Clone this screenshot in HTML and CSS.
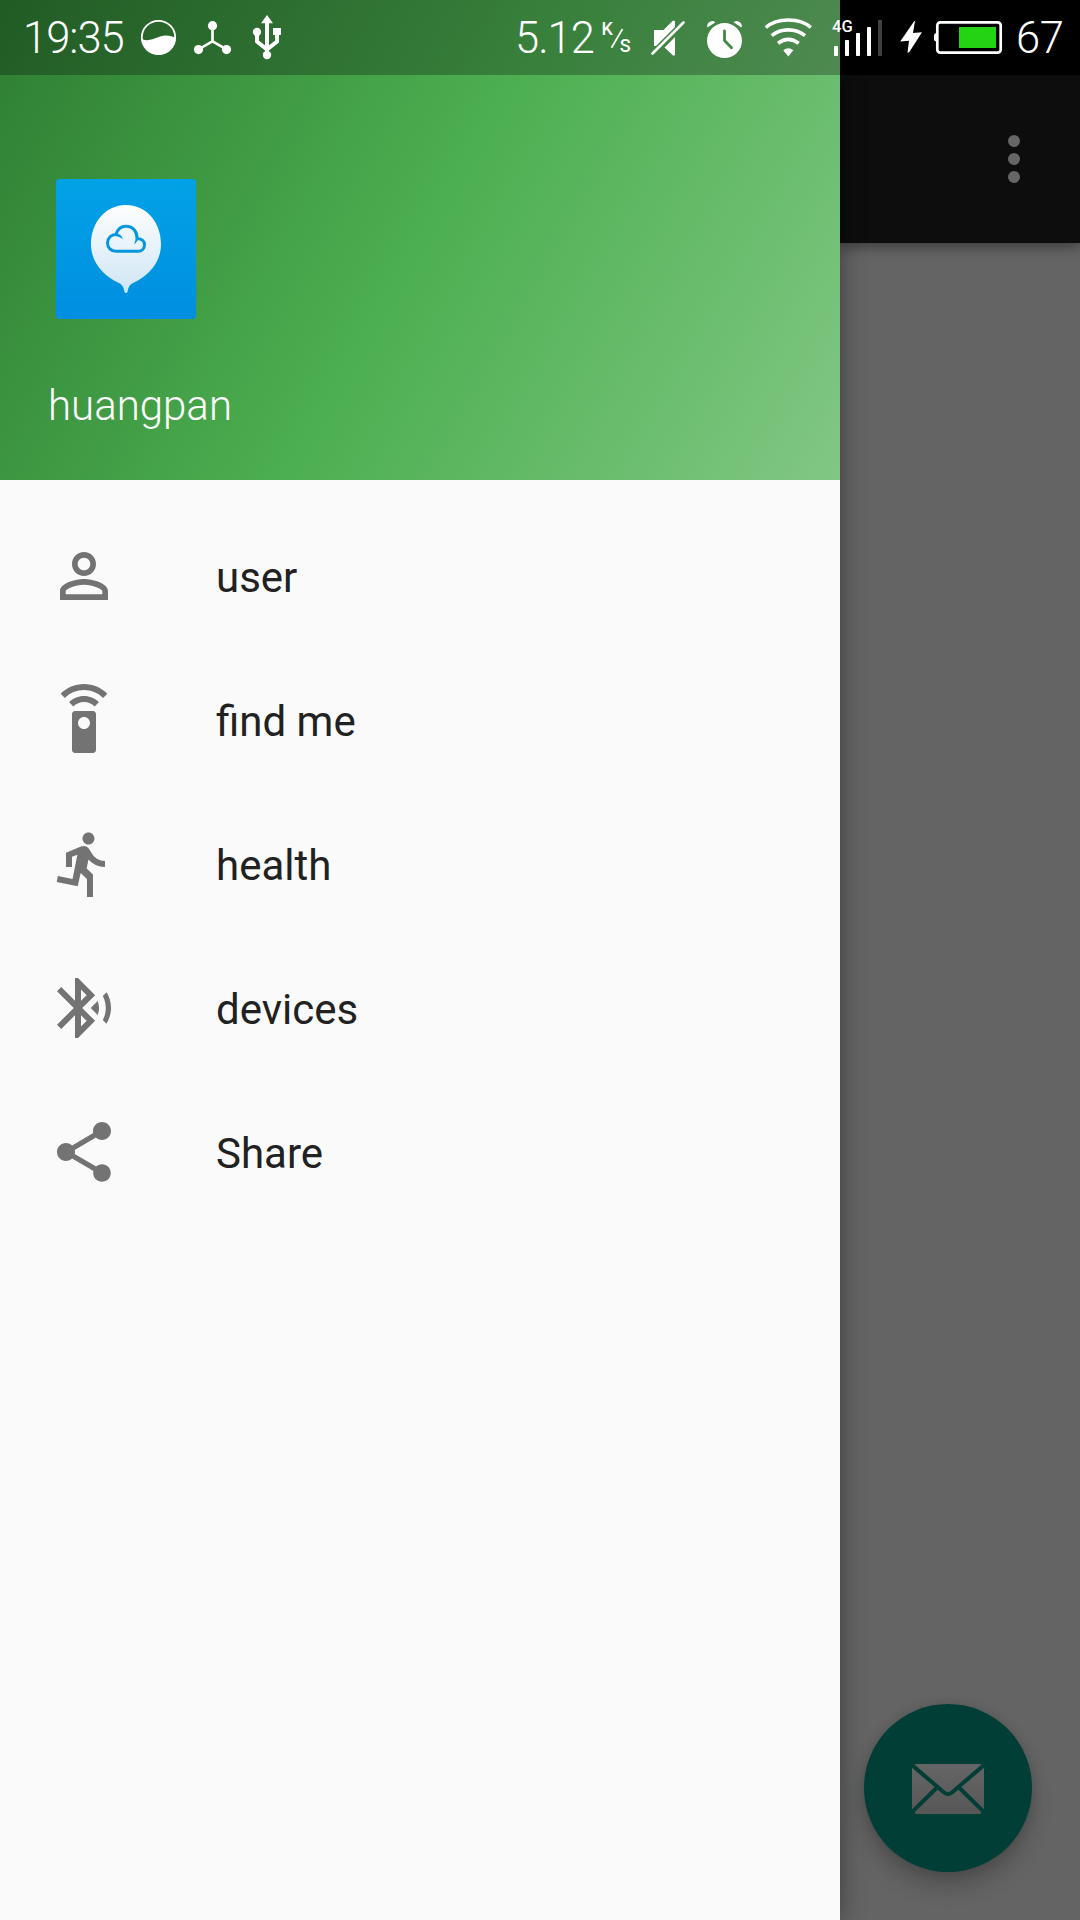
FILE: index.html
```html
<!DOCTYPE html>
<html lang="en">
<head>
<meta charset="utf-8">
<title>Navigation drawer</title>
<link rel="stylesheet" href="styles.css">
</head>
<body>
<div class="screen">
  <header class="status">
    <span class="clock">19:35</span>
    <svg class="ball" width="36" height="36" viewBox="141 20 36 36"><circle cx="158.5" cy="37.5" r="16.7" fill="none" stroke="#fff" stroke-width="1.8"/><path d="M142 39.3C153 42.500 157 35.500 166 35.600C170 35.600 173 37 175.500 38C175 47 168 54.500 158.500 54.500C149.500 54.500 142.500 48 142 39.300Z" fill="#fff"/></svg>
    <svg class="tripod" width="38" height="36" viewBox="194 20 38 36"><path d="M212.500 26V41.300L198.500 49.300M212.500 41.300L226.500 49.300" fill="none" stroke="#fff" stroke-width="2.700"/><g fill="#fff"><circle cx="212.500" cy="25.700" r="4.600"/><circle cx="198.500" cy="49.600" r="4.600"/><circle cx="226.500" cy="49.600" r="4.600"/></g></svg>
    <svg class="usb" width="30" height="46" viewBox="252 14 30 46"><path d="M267 20V54M257 32V41.500L267 49.500L277 41.500V32" fill="none" stroke="#fff" stroke-width="4"/><path d="M267 15L273 23.300H261Z" fill="#fff"/><circle cx="257" cy="32" r="4.200" fill="#fff"/><circle cx="267" cy="55" r="4.200" fill="#fff"/><path d="M273 28H281V35H273Z" fill="#fff"/></svg>
    <span class="rate">5.12</span>
    <svg class="unit" width="36" height="50" viewBox="599 12 36 50"><text x="601.400" y="35" class="tiny">K</text><path d="M622.500 29L611.500 47.700" stroke="#fff" stroke-width="1.700"/><text x="619.700" y="52" class="tiny">S</text></svg>
    <svg class="mute" width="36" height="38" viewBox="650 19 36 38"><path d="M654 30H663.500L672.500 21Q675 19.500 675 22V27L656 46H654ZM664.500 47.500L675 37V54Q675 56.800 672.800 55.200Z" fill="#fff"/><path d="M652.500 53.500L683.500 22.500" stroke="#fff" stroke-width="2.600" stroke-linecap="round"/></svg>
    <svg class="alarm" width="38" height="40" viewBox="706 19 38 40"><circle cx="724.500" cy="40.600" r="17.500" fill="#fff"/><path d="M724.500 31V40.500L731.500 47.800" fill="none" stroke="#458748" stroke-width="2.800" stroke-linecap="round" stroke-linejoin="round"/><path d="M707.300 27.500Q706.500 22.500 711 21.200Q714 20.500 715.300 22.500ZM741.700 27.500Q742.500 22.500 738 21.200Q735 20.500 733.700 22.500Z" fill="#fff"/></svg>
    <svg class="wifi" width="50" height="42" viewBox="764 17 50 42"><path d="M765.800 27.500C777 17.500 800 17.500 810.800 27.500M771.700 35.600C781 28 795.500 28 805 35.600M778 43.300C784.500 38.300 792 38.300 798.700 43.300" fill="none" stroke="#fff" stroke-width="3.600"/><path d="M788.300 56.500L783.300 50.200Q788.300 46.200 793.300 50.200Z" fill="#fff"/></svg>
    <svg class="signal" width="54" height="48" viewBox="829 11 54 48"><text x="832" y="32" class="network">4G</text><g fill="#fff"><rect x="834" y="46" width="4" height="10" rx=".8"/><rect x="845" y="40" width="4" height="16" rx=".8"/><rect x="856" y="33" width="4" height="23" rx=".8"/><rect x="867" y="27" width="4" height="29" rx=".8"/></g><rect x="878" y="20" width="4" height="36" rx=".8" fill="#404040"/></svg>
    <svg class="bolt" width="24" height="34" viewBox="899 20 24 34"><path d="M914.300 21L900.200 41.400L909 40.800L907.500 52.500L909 52.500L922 32.300L913 33L915 21Z" fill="#fff"/></svg>
    <svg class="battery" width="70" height="36" viewBox="933 20 70 36"><rect x="937.300" y="22.300" width="63.400" height="30.400" rx="3" fill="none" stroke="#fff" stroke-width="2.700"/><path d="M937 33Q934 33 934 36V39Q934 41.500 937 41.500Z" fill="#fff"/><rect x="959" y="27" width="37" height="21" fill="#23d314"/></svg>
    <span class="level">67</span>
  </header>

  <main class="page">
    <div class="appbar">
      <svg width="12" height="48" viewBox="0 0 12 48" fill="#666"><circle cx="6" cy="6" r="6"/><circle cx="6" cy="24" r="6"/><circle cx="6" cy="42" r="6"/></svg>
    </div>
    <div class="fab">
      <svg width="72" height="50" viewBox="0 0 72 50">
        <defs><linearGradient id="paper" x1="0" y1="0" x2="0" y2="1"><stop offset="0" stop-color="#656565"/><stop offset="1" stop-color="#575757"/></linearGradient></defs>
        <path d="M0 0H72V50H0Z" fill="url(#paper)"/>
        <path d="M0 1L32 28.500Q36 31.500 40 28.500L72 1M0 48L24.500 24M72 48L47.500 24" fill="none" stroke="#003e36" stroke-width="4"/>
        <path d="M0 0H3.500L0 4ZM72 0H68.500L72 4ZM0 50V46L4 50ZM72 50V46L68 50Z" fill="#003e36"/>
      </svg>
    </div>
  </main>

  <aside class="drawer">
    <div class="profile">
      <svg class="avatar" width="140" height="140" viewBox="0 0 140 140">
        <defs>
          <linearGradient id="sky" x1="0" y1="0" x2="0" y2="1"><stop offset="0" stop-color="#02a2e6"/><stop offset="1" stop-color="#008ee1"/></linearGradient>
          <linearGradient id="balloon" x1="0" y1="0" x2="0" y2="1"><stop offset="0" stop-color="#fdfeff"/><stop offset="1" stop-color="#cfe5f4"/></linearGradient>
        </defs>
        <rect width="140" height="140" rx="3.500" fill="url(#sky)"/>
        <path d="M70 26C90 26 105 43 105 65C105 84 92 97 77 104C73 106 72.300 109 71.500 113Q70 115 68.500 113C67.700 109 67 106 63 104C48 97 35 84 35 65C35 43 50 26 70 26Z" fill="url(#balloon)"/>
        <path d="M60 72.300C55 72.300 51.500 68.500 51.500 64C51.500 59 55.500 55.300 60 55.500C61.500 50.500 65 47.300 70 47.300C77 47.300 81.500 53 81 59.700C85.500 59.200 88.500 62 88.500 65.800C88.500 69.500 86 72.300 82 72.300Z" fill="none" stroke="#0596e0" stroke-width="3"/>
        <path d="M59 54.200Q65 54 67 60.500Q63.500 57 58 57ZM82.500 58.500Q79 60 78.300 65.500Q82 62.500 82.500 58.500Z" fill="#0596e0"/>
      </svg>
      <div class="name">huangpan</div>
    </div>
    <nav class="menu">
      <a class="item"><svg viewBox="0 0 24 24"><path d="M12 5.900c1.160 0 2.100.94 2.100 2.100s-.94 2.100-2.100 2.100S9.900 9.160 9.900 8s.94-2.100 2.100-2.100m0 9c2.970 0 6.100 1.460 6.100 2.100v1.100H5.900V17c0-.64 3.130-2.100 6.100-2.100M12 4C9.790 4 8 5.790 8 8s1.790 4 4 4 4-1.790 4-4-1.790-4-4-4zm0 9c-2.670 0-8 1.340-8 4v3h16v-3c0-2.660-5.330-4-8-4z"/></svg><span>user</span></a>
      <a class="item"><svg viewBox="0 0 24 24"><path d="M15 9H9c-.55 0-1 .45-1 1v12c0 .55.45 1 1 1h6c.55 0 1-.45 1-1V10c0-.55-.45-1-1-1zm-3 6c-1.100 0-2-.9-2-2s.9-2 2-2 2 .9 2 2-.9 2-2 2zM7.050 6.050l1.410 1.410C9.370 6.560 10.620 6 12 6s2.630.56 3.540 1.460l1.410-1.410C15.680 4.780 13.930 4 12 4s-3.680.78-4.950 2.050zM12 0C8.960 0 6.210 1.230 4.220 3.220l1.410 1.410C7.260 3.010 9.510 2 12 2s4.740 1.010 6.360 2.640l1.410-1.410C17.790 1.230 15.040 0 12 0z"/></svg><span>find me</span></a>
      <a class="item"><svg viewBox="0 0 24 24"><path d="M13.490 5.480c1.100 0 2-.9 2-2s-.9-2-2-2-2 .9-2 2 .9 2 2 2zm-3.600 13.900l1-4.400 2.100 2v6h2v-7.500l-2.100-2 .6-3c1.300 1.500 3.300 2.500 5.500 2.500v-2c-1.900 0-3.500-1-4.300-2.400l-1-1.600c-.4-.6-1-1-1.700-1-.3 0-.5.1-.8.1l-5.200 2.200v4.700h2v-3.400l1.800-.7-1.600 8.100-4.900-1-.4 2 7 1.400z"/></svg><span>health</span></a>
      <a class="item"><svg viewBox="0 0 24 24"><path d="M14.240 12.010l2.320 2.320c.28-.72.44-1.510.44-2.330 0-.82-.16-1.590-.43-2.310l-2.330 2.320zm5.290-5.300l-1.260 1.260c.63 1.210.98 2.570.98 4.020s-.36 2.820-.98 4.020l1.200 1.200c.97-1.540 1.540-3.360 1.540-5.310-.01-1.890-.55-3.670-1.480-5.190zm-3.820 1L10 2H9v7.590L4.410 5 3 6.410 8.590 12 3 17.590 4.410 19 9 14.410V22h1l5.710-5.710-4.300-4.290 4.300-4.290zM11 5.830l1.880 1.880L11 9.590V5.830zm1.880 10.460L11 18.170v-3.760l1.880 1.880z"/></svg><span>devices</span></a>
      <a class="item"><svg viewBox="0 0 24 24"><path d="M18 16.080c-.76 0-1.440.3-1.960.77L8.910 12.700c.05-.23.09-.46.09-.7s-.04-.47-.09-.7l7.050-4.110c.54.5 1.250.81 2.040.81 1.660 0 3-1.340 3-3s-1.340-3-3-3-3 1.340-3 3c0 .24.04.47.09.7L8.040 9.810C7.500 9.310 6.790 9 6 9c-1.660 0-3 1.340-3 3s1.340 3 3 3c.79 0 1.500-.31 2.040-.81l7.120 4.160c-.05.21-.08.43-.08.65 0 1.610 1.310 2.920 2.920 2.920 1.610 0 2.920-1.310 2.920-2.920s-1.310-2.920-2.920-2.920z"/></svg><span>Share</span></a>
    </nav>
  </aside>
</div>
</body>
</html>
```
FILE: styles.css
```css
* { box-sizing: border-box; }
body { margin: 0; }

.screen {
  display: grid;
  grid-template-columns: 840px 240px;
  width: 1080px;
  height: 1920px;
  overflow: hidden;
  background: #646464;
  font-family: Roboto, "Liberation Sans", sans-serif;
}

/* The status bar spans both columns and is laid over the top of them. */
.status {
  grid-area: 1 / 1 / 2 / 3;
  z-index: 3;
  display: flex;
  align-items: flex-start;
  height: 75px;
  background: linear-gradient(to right, rgba(0, 0, 0, .27) 840px, #000 840px);
  color: #fff;
  font-size: 43.5px;
  font-weight: 300;
  letter-spacing: -1px;
  line-height: 77px;
  white-space: nowrap;
}
.status svg { display: block; flex: none; overflow: visible; letter-spacing: 0; }
.clock { width: 141px; padding-left: 23px; }
.ball { margin-top: 20px; }
.tripod { margin: 20px 0 0 17px; }
.usb { margin: 14px 0 0 20px; }
.rate { width: 84px; margin-left: 233px; }
.unit { margin-top: 12px; }
.mute { margin: 19px 0 0 15px; }
.alarm { margin: 19px 0 0 20px; }
.wifi { margin: 17px 0 0 20px; }
.signal { margin: 11px 0 0 15px; }
.bolt { margin: 20px 0 0 16px; }
.battery { margin: 20px 0 0 10px; }
.level { margin-left: 13px; letter-spacing: -.5px; }
.tiny { fill: #fff; font-size: 18px; font-weight: 500; }
.network { fill: #fff; font-size: 16.5px; font-weight: 500; }

.page {
  grid-area: 1 / 2;
  display: flex;
  flex-direction: column;
  justify-content: space-between;
  height: 1920px;
}
.appbar {
  display: flex;
  justify-content: flex-end;
  height: 243px;
  padding: 135px 60px 0 0;
  background: #0d0d0d;
  box-shadow: 0 4px 12px rgba(0, 0, 0, .4);
}
.fab {
  display: flex;
  align-items: center;
  justify-content: center;
  width: 168px;
  height: 168px;
  margin: 0 0 48px 24px;
  padding-top: 1px;
  border-radius: 50%;
  background: #003e36;
  box-shadow: 0 15px 22px rgba(0, 0, 0, .2), 0 0 12px rgba(0, 0, 0, .12);
}

.drawer {
  grid-area: 1 / 1;
  z-index: 2;
  height: 1920px;
  background: #fafafa;
  box-shadow: 0 0 24px rgba(0, 0, 0, .4);
}
.profile {
  height: 480px;
  padding: 179px 48px 0;
  background: linear-gradient(119.745deg, #2e7d32, #4caf50 50%, #81c784);
}
.avatar { display: block; margin-left: 8px; }
.name {
  margin-top: 62px;
  color: #fff;
  font-size: 42px;
  font-weight: 300;
  line-height: 50px;
}
.menu { padding-top: 24px; }
.item {
  display: flex;
  align-items: center;
  gap: 96px;
  height: 144px;
  padding-left: 48px;
  color: #212121;
  font-size: 42px;
  line-height: 50px;
}
.item svg { width: 72px; height: 72px; fill: #737373; }
.item span { margin-top: 4px; }
```
